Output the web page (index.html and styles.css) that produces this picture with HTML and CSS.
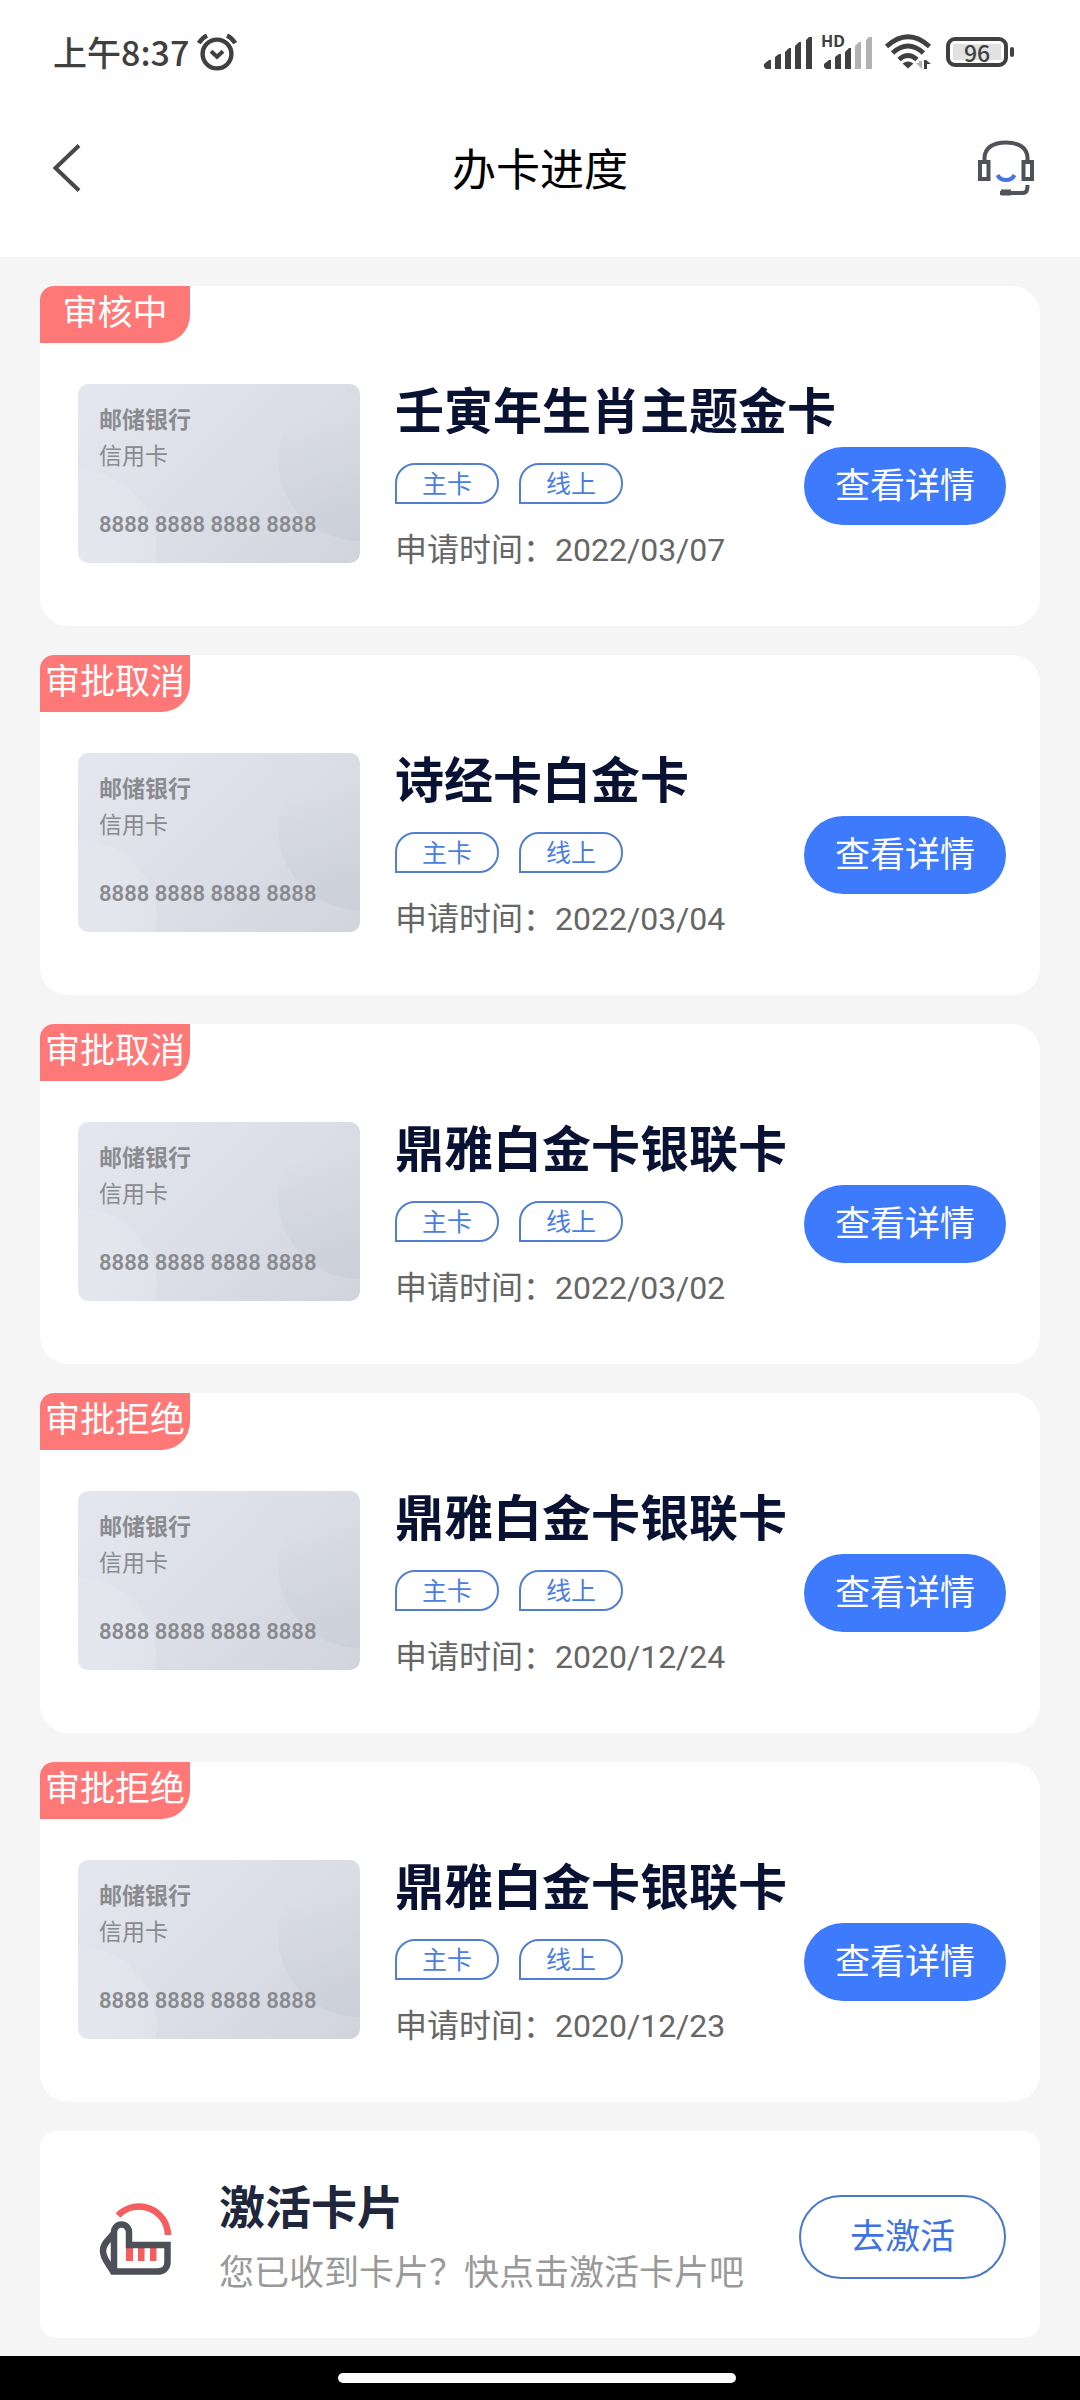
FILE: index.html
```html
<!DOCTYPE html>
<html lang="zh-CN">
<head>
<meta charset="utf-8">
<meta name="viewport" content="width=device-width, initial-scale=1">
<title>办卡进度</title>
<link rel="stylesheet" href="styles.css">
</head>
<body>
<div class="status-bar">
  <span class="clock">上午8:37</span>
  <svg class="alarm" width="40" height="38" viewBox="0 0 40 38" fill="none" stroke="#404040" aria-hidden="true">
    <circle cx="20" cy="21" r="14.4" stroke-width="4.400"/>
    <path d="M1.8 10.2Q5 5 10 2.6M38.2 10.2Q35 5 30 2.6" stroke-width="4.400"/>
    <path d="M14 18.2 20 23.8 26 18.2" stroke-width="4"/>
  </svg>
  <div class="indicators">
    <svg width="48" height="34" viewBox="0 0 48 34" fill="#404040" aria-hidden="true">
      <path d="M0 32v-3l5-4h2v9H2zM11 22l4-3h2v15h-6zM21 17l4-4h2v21h-6zM31 11l4-4h2v27h-6zM42 5l3-3h3v32h-6z"/>
    </svg>
    <svg class="signal-hd" width="50" height="34" viewBox="0 0 50 34" fill="#404040" aria-hidden="true">
      <text class="hd" x="-1" y="12">HD</text>
      <path d="M2 32v-3l5-4h2v9H4zM13 22l4-3h2v15h-6zM23 17l4-4h2v21h-6z"/>
      <path d="M33 11l4-4h2v27h-6zM44 5l3-3h3v32h-6z" fill="#b2b2b2"/>
    </svg>
    <svg class="wifi" width="46" height="36" viewBox="0 0 46 36" fill="none" stroke="#404040" stroke-width="4.8" aria-hidden="true">
      <path d="M1.5 12.5Q23-7 44.500 12.500M7.500 19Q23 5 38.500 19M14 25.500Q23 17.500 32 25.500"/>
      <path d="M17.500 29.500Q23 25.500 28.500 29.500L23 34.500Z" fill="#404040" stroke="none"/>
      <path d="M37 35l-6-6h3v-2h3z" fill="#b2b2b2" stroke="none"/>
      <path d="M39 35h3v-5h4l-5-4h-2z" fill="#404040" stroke="none"/>
    </svg>
    <div class="battery"><span class="level">96</span></div>
  </div>
</div>

<header class="nav">
  <button class="icon-button back" type="button" aria-label="返回">
    <svg width="30" height="50" viewBox="0 0 30 50" fill="none" stroke="#484848" stroke-width="4"><path d="M27 2.500 3.500 25 27 47.500"/></svg>
  </button>
  <h1 class="nav-title">办卡进度</h1>
  <button class="icon-button service" type="button" aria-label="客服">
    <svg width="56" height="56" viewBox="0 0 56 56" fill="none" stroke="#505259" stroke-width="4">
      <path d="M6.500 20V18C6.500 8 15 2.500 28 2.500S49.500 8 49.500 18v2"/>
      <path d="M2 22h8.500v17H2zM45.500 22H54v17h-8.500z"/>
      <path d="M49.500 45c0 6-1 8-6 8H22" />
      <path d="M23 52.500h10" stroke-width="6"/>
      <path d="M19.500 35Q22 40 28 40T36.500 35" stroke="#4475e0"/>
    </svg>
  </button>
</header>

<main class="list">
  <article class="card">
    <span class="tag">审核中</span>
    <div class="card-body">
      <div class="bank-card"><b class="bank">邮储银行</b><span class="kind">信用卡</span><span class="number">8888 8888 8888 8888</span></div>
      <div class="detail">
        <h2 class="card-name">壬寅年生肖主题金卡</h2>
        <div class="row">
          <div class="info">
            <div class="chips"><span class="chip">主卡</span><span class="chip">线上</span></div>
            <p class="date">申请时间：2022/03/07</p>
          </div>
          <button class="primary" type="button">查看详情</button>
        </div>
      </div>
    </div>
  </article>

  <article class="card">
    <span class="tag">审批取消</span>
    <div class="card-body">
      <div class="bank-card"><b class="bank">邮储银行</b><span class="kind">信用卡</span><span class="number">8888 8888 8888 8888</span></div>
      <div class="detail">
        <h2 class="card-name">诗经卡白金卡</h2>
        <div class="row">
          <div class="info">
            <div class="chips"><span class="chip">主卡</span><span class="chip">线上</span></div>
            <p class="date">申请时间：2022/03/04</p>
          </div>
          <button class="primary" type="button">查看详情</button>
        </div>
      </div>
    </div>
  </article>

  <article class="card">
    <span class="tag">审批取消</span>
    <div class="card-body">
      <div class="bank-card"><b class="bank">邮储银行</b><span class="kind">信用卡</span><span class="number">8888 8888 8888 8888</span></div>
      <div class="detail">
        <h2 class="card-name">鼎雅白金卡银联卡</h2>
        <div class="row">
          <div class="info">
            <div class="chips"><span class="chip">主卡</span><span class="chip">线上</span></div>
            <p class="date">申请时间：2022/03/02</p>
          </div>
          <button class="primary" type="button">查看详情</button>
        </div>
      </div>
    </div>
  </article>

  <article class="card">
    <span class="tag">审批拒绝</span>
    <div class="card-body">
      <div class="bank-card"><b class="bank">邮储银行</b><span class="kind">信用卡</span><span class="number">8888 8888 8888 8888</span></div>
      <div class="detail">
        <h2 class="card-name">鼎雅白金卡银联卡</h2>
        <div class="row">
          <div class="info">
            <div class="chips"><span class="chip">主卡</span><span class="chip">线上</span></div>
            <p class="date">申请时间：2020/12/24</p>
          </div>
          <button class="primary" type="button">查看详情</button>
        </div>
      </div>
    </div>
  </article>

  <article class="card">
    <span class="tag">审批拒绝</span>
    <div class="card-body">
      <div class="bank-card"><b class="bank">邮储银行</b><span class="kind">信用卡</span><span class="number">8888 8888 8888 8888</span></div>
      <div class="detail">
        <h2 class="card-name">鼎雅白金卡银联卡</h2>
        <div class="row">
          <div class="info">
            <div class="chips"><span class="chip">主卡</span><span class="chip">线上</span></div>
            <p class="date">申请时间：2020/12/23</p>
          </div>
          <button class="primary" type="button">查看详情</button>
        </div>
      </div>
    </div>
  </article>

  <section class="activate">
    <svg class="hand" width="72" height="74" viewBox="0 0 72 74" fill="none" aria-hidden="true">
      <path d="M18 13.500A29 29 0 0 1 68 33" stroke="#f55d5f" stroke-width="6.500"/>
      <path d="M26 46h7v13h-7zM38 46h6.500v13H38zM50 46h6.500v13H50z" fill="#f55d5f"/>
      <path d="M14 69.500V30a7.500 7.500 0 0 1 15 0v13h38.500v17c0 6-4 9.500-10 9.500H13C9 62 3 57 3 49S9 38 13 32" stroke="#4e5059" stroke-width="6.500"/>
    </svg>
    <div class="activate-text">
      <h2 class="activate-title">激活卡片</h2>
      <p class="activate-hint">您已收到卡片？快点击激活卡片吧</p>
    </div>
    <button class="outline" type="button">去激活</button>
  </section>
</main>

<footer class="home-bar"><span class="home-pill"></span></footer>
</body>
</html>
```
FILE: styles.css
```css
* { box-sizing: border-box; }

body {
  margin: 0;
  min-height: 100vh;
  display: flex;
  flex-direction: column;
  background: #f5f5f5;
  font-family: Roboto, "Noto Sans CJK SC", sans-serif;
}

h1, h2, p { margin: 0; }

button {
  font-family: inherit;
  padding: 0;
  border: 0;
  background: none;
}

svg { display: block; flex: none; overflow: visible; }

/* Status bar */
.status-bar {
  display: flex;
  align-items: center;
  height: 104px;
  padding: 0 72px 0 53px;
  background: #fefefe;
  color: #404040;
}
.clock {
  font-family: "Noto Sans CJK SC", sans-serif;
  font-size: 34px;
  line-height: 40px;
  font-weight: 500;
}
.alarm { margin-left: 8px; }
.indicators {
  display: flex;
  align-items: center;
  margin-left: auto;
}
.signal-hd { margin-left: 10px; }
.hd { font: 700 16px "Noto Sans", sans-serif; }
.wifi { margin-left: 13px; }
.battery {
  position: relative;
  width: 62px;
  height: 30px;
  margin-left: 15px;
  padding: 3px;
  border: 4px solid #404040;
  border-radius: 9px;
}
.battery::after {
  content: "";
  position: absolute;
  right: -10px;
  top: 6px;
  width: 4px;
  height: 10px;
  border-radius: 2px;
  background: #404040;
}
.level {
  display: block;
  height: 16px;
  background: #e2e2e2;
  font: 500 23px/16px "Noto Sans CJK SC", sans-serif;
  text-align: center;
}

/* Navigation */
.nav {
  display: grid;
  grid-template-columns: 1fr auto 1fr;
  align-items: center;
  height: 153px;
  padding: 0 46px 25px 52px;
  background: #fefefe;
}
.nav-title {
  padding: 6px 6px 0 0;
  font-size: 44px;
  line-height: 60px;
  font-weight: 400;
  color: #000;
}
.back { justify-self: start; }
.service { justify-self: end; }

/* Applications */
.list {
  flex: 1;
  display: flex;
  flex-direction: column;
  gap: 29px;
  padding: 29px 40px 18px;
}
.card {
  border-radius: 28px;
  border-top-left-radius: 14px;
  background: #fff;
  overflow: hidden;
}
.tag {
  display: block;
  width: 150px;
  height: 57px;
  border-bottom-right-radius: 28px;
  background: #ff7878;
  color: #fff;
  font-size: 35px;
  line-height: 56px;
  text-align: center;
}
.card-body {
  display: grid;
  grid-template-columns: 282px 1fr;
  gap: 35px;
  align-items: start;
  padding: 41px 34px 60px 38px;
}
.bank-card {
  position: relative;
  z-index: 0;
  display: flex;
  flex-direction: column;
  height: 179px;
  padding: 19px 21px;
  border-radius: 10px;
  background:
    radial-gradient(circle at 0 165px, #ebedf590 0, #e9ebf350 78px, transparent 79px),
    linear-gradient(135deg, #e4e7ef, #dcdfe7 50%, #d1d4dd);
  color: #8a8b8e;
  font-size: 23px;
  line-height: 36px;
  overflow: hidden;
}
.bank-card::after {
  content: "";
  position: absolute;
  z-index: -1;
  left: 200px;
  top: -7px;
  width: 164px;
  height: 164px;
  border-radius: 50%;
  background: linear-gradient(to bottom, transparent 25%, #c4c8d370);
}
.bank { font-weight: 700; }
.number {
  margin-top: 32px;
  font-size: 22px;
  font-weight: 600;
  white-space: nowrap;
}
.card-name {
  padding-top: 3px;
  font-size: 49px;
  line-height: 52px;
  font-weight: 700;
  color: #0a1234;
}
.row {
  display: flex;
  justify-content: space-between;
  align-items: flex-start;
  margin-top: 8px;
}
.info { padding-top: 16px; }
.chips { display: flex; gap: 20px; }
.chip {
  width: 104px;
  height: 41px;
  border: 2px solid #527fd0;
  border-radius: 20px 20px 20px 0;
  color: #4b7ee0;
  font-size: 25px;
  line-height: 39px;
  text-align: center;
}
.date {
  margin-top: 30px;
  color: #666;
  font-size: 32px;
  line-height: 32px;
}
.primary {
  width: 202px;
  height: 78px;
  padding-top: 2px;
  border-radius: 39px;
  background: #3e7afc;
  color: #fff;
  font-size: 35px;
  line-height: 76px;
}

/* Activation */
.activate {
  display: flex;
  align-items: center;
  padding: 50px 34px 41px 60px;
  border-radius: 16px;
  background: #fff;
}
.activate-text { margin-left: 47px; }
.activate-title {
  font-size: 46px;
  line-height: 54px;
  font-weight: 700;
  color: #20263c;
}
.activate-hint {
  margin-top: 14px;
  padding-top: 2px;
  color: #999;
  font-size: 35px;
  line-height: 46px;
}
.outline {
  width: 207px;
  height: 84px;
  margin: 0 0 4px auto;
  border: 2px solid #4a78cc;
  border-radius: 42px;
  color: #3f73e0;
  font-size: 35px;
  line-height: 82px;
}

/* System gesture bar */
.home-bar {
  display: flex;
  justify-content: center;
  align-items: center;
  height: 44px;
  padding-right: 6px;
  background: #000;
}
.home-pill {
  width: 37%;
  height: 10px;
  border-radius: 5px;
  background: #fff;
}
```
